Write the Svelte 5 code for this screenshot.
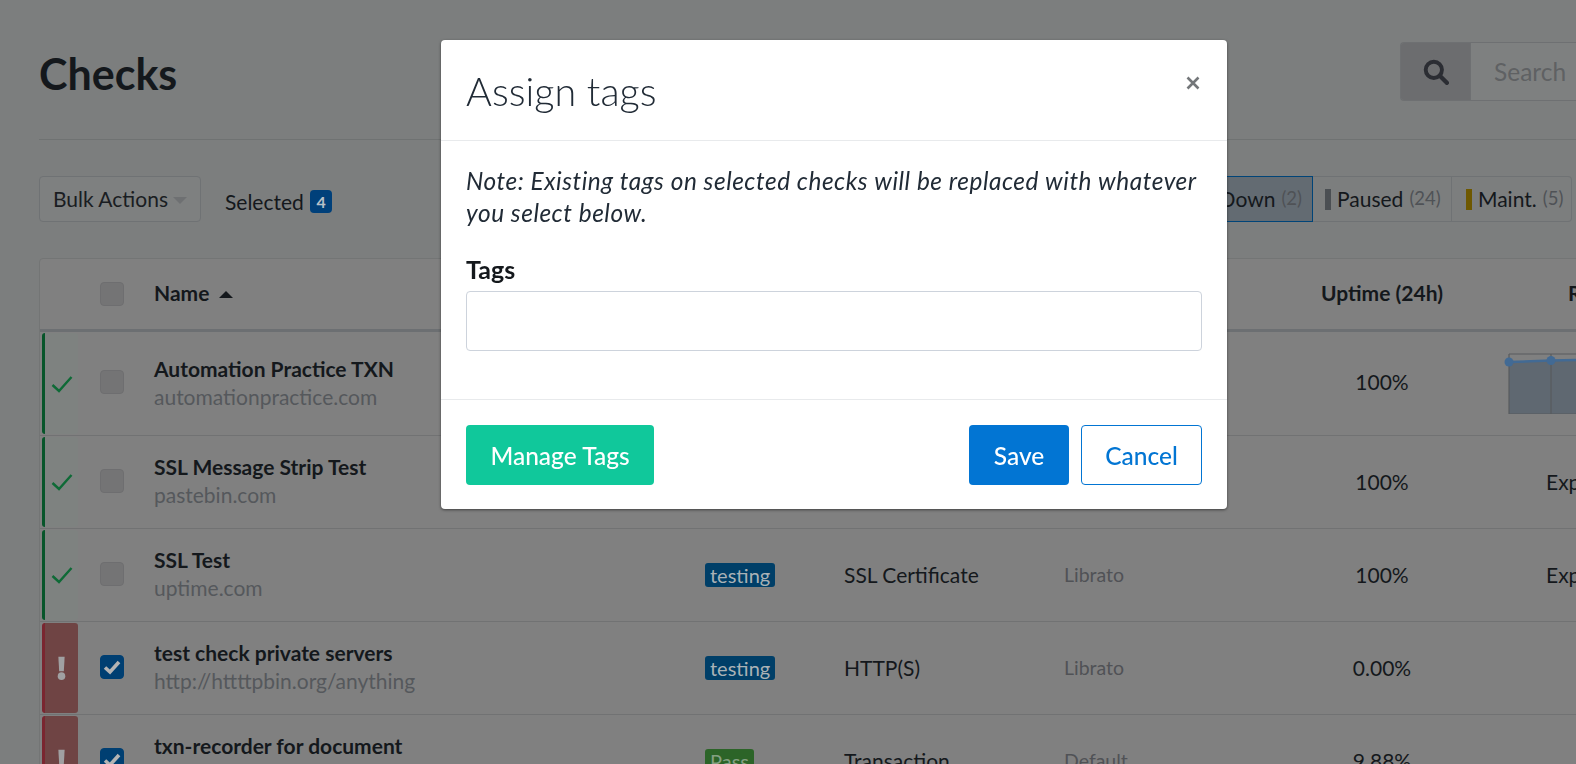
<script>
	const rows = [
		{ name: 'Automation Practice TXN', url: 'automationpractice.com', status: 'up', tall: true, uptime: '100%', chart: true },
		{ name: 'SSL Message Strip Test', url: 'pastebin.com', status: 'up', uptime: '100%', resp: 'Exp' },
		{ name: 'SSL Test', url: 'uptime.com', status: 'up', tag: 'testing', type: 'SSL Certificate', loc: 'Librato', uptime: '100%', resp: 'Exp' },
		{ name: 'test check private servers', url: 'http://httttpbin.org/anything', status: 'down', tag: 'testing', type: 'HTTP(S)', loc: 'Librato', uptime: '0.00%' },
		{ name: 'txn-recorder for document', url: '', status: 'down', tag: 'Pass', type: 'Transaction', loc: 'Default', uptime: '9.88%' }
	];
</script>

<div class="page">
	<header class="top">
		<h1>Checks</h1>
		<div class="search">
			<span class="search-btn">
				<svg viewBox="0 0 24 24" width="26" height="26"><circle cx="10" cy="10" r="7.5" fill="none" stroke="currentColor" stroke-width="3.6" /><path d="M15.5 15.5 22 22" stroke="currentColor" stroke-width="4" stroke-linecap="round" /></svg>
			</span>
			<span class="search-input">Search</span>
		</div>
	</header>

	<div class="toolbar">
		<button class="bulk">Bulk Actions <i class="caret"></i></button>
		<span class="selected">Selected <b class="count">4</b></span>
		<div class="filters">
			<span class="filter active">Down <small>(2)</small></span>
			<span class="filter paused-filter"><i class="swatch paused"></i>Paused <small>(24)</small></span>
			<span class="filter maint-filter"><i class="swatch maint"></i>Maint. <small>(5)</small></span>
		</div>
	</div>

	<div class="table">
		<div class="row head">
			<div></div>
			<div><span class="box"></span></div>
			<div class="sort">Name <i class="sort-caret"></i></div>
			<div></div>
			<div></div>
			<div></div>
			<div class="center">Uptime (24h)</div>
			<div class="resp-head">Response</div>
		</div>
		{#each rows as r}
			<div class="row" class:tall={r.tall}>
				<div class="status {r.status}">
					{#if r.status === 'up'}
						<svg viewBox="0 0 22 18" width="22" height="18"><path d="M1.5 10 8 16 20.5 2" fill="none" stroke="currentColor" stroke-width="2.4" /></svg>
					{:else}
						<svg viewBox="0 0 10 26" width="9" height="25"><path d="M1.5 0h7L7.6 16H2.4z" fill="currentColor" /><circle cx="5" cy="21.5" r="4.2" fill="currentColor" /></svg>
					{/if}
				</div>
				<div>
					{#if r.status === 'down'}
						<span class="box on">
							<svg viewBox="0 0 20 20" width="20" height="20"><path d="M3 10.5 8 15 17 5" fill="none" stroke="currentColor" stroke-width="3.6" /></svg>
						</span>
					{:else}
						<span class="box"></span>
					{/if}
				</div>
				<div class="name">
					<strong>{r.name}</strong>
					<span>{r.url}</span>
				</div>
				<div>
					{#if r.tag}<span class="tag" class:pass={r.tag === 'Pass'}>{r.tag}</span>{/if}
				</div>
				<div>{r.type ?? ''}</div>
				<div class="loc">{r.loc ?? ''}</div>
				<div class="center">{r.uptime}</div>
				<div class="resp">
					{#if r.chart}
						<svg class="chart" viewBox="0 0 80 64" width="80" height="64">
							<path d="M5 12 47 10.5 80 10V64H5z" fill="#5f6871" />
							<path d="M5 4H80M5 4V64H80M47 4V64" fill="none" stroke="#585b5e" stroke-width="1.2" />
							<path d="M5 12 47 10.5 80 10" fill="none" stroke="#426a94" stroke-width="2.5" />
							<circle cx="5" cy="12" r="4.5" fill="#426a94" />
							<circle cx="47" cy="10.5" r="4.5" fill="#426a94" />
						</svg>
					{:else if r.resp}
						<span class="exp">{r.resp}</span>
					{/if}
				</div>
			</div>
		{/each}
	</div>
</div>

<div class="modal-wrap">
	<div class="modal">
		<div class="modal-header">
			<h2>Assign tags</h2>
			<span class="close">
				<svg viewBox="0 0 14 14" width="14" height="14"><path d="M1.5 1.5 12.5 12.5M12.5 1.5 1.5 12.5" stroke="currentColor" stroke-width="2.6" /></svg>
			</span>
		</div>
		<div class="modal-body">
			<p>Note: Existing tags on selected checks will be replaced with whatever you select below.</p>
			<label for="tags">Tags</label>
			<input id="tags" type="text" />
		</div>
		<div class="modal-footer">
			<button class="btn manage">Manage Tags</button>
			<button class="btn save">Save</button>
			<button class="btn cancel">Cancel</button>
		</div>
	</div>
</div>

<style>
	:global(body) {
		margin: 0;
		overflow: hidden;
		background: #7c7e7e;
		font-family: Lato, 'Liberation Sans', sans-serif;
		color: #14181c;
	}

	.page {
		width: 1576px;
		height: 764px;
		box-sizing: border-box;
		padding-left: 39px;
		overflow: hidden;
		font-size: 21px;
	}

	.top {
		display: flex;
		justify-content: space-between;
		align-items: center;
		height: 140px;
		padding-top: 7px;
		box-sizing: border-box;
		border-bottom: 1px solid #6f7272;
		width: 1537px;
		white-space: nowrap;
	}

	h1 {
		margin: 0;
		font-size: 43px;
		font-weight: 700;
		color: #14181c;
	}

	.search {
		display: flex;
		width: 176px;
		height: 59px;
		box-sizing: border-box;
		border: 1px solid #6e7072;
		border-right: 0;
		border-radius: 4px 0 0 4px;
		margin-top: -3px;
		overflow: hidden;
	}

	.search-btn {
		width: 69px;
		display: flex;
		align-items: center;
		justify-content: center;
		background: #6c6d6f;
		border-right: 1px solid #6e7072;
		color: #2b2d33;
	}

	.search-input {
		flex: 1;
		padding-left: 23px;
		line-height: 57px;
		font-size: 24.5px;
		color: #5f6163;
		background: #7e8080;
	}

	.toolbar {
		display: flex;
		align-items: center;
		margin-top: 36px;
		height: 46px;
		width: 1533px;
		white-space: nowrap;
	}

	.bulk {
		width: 162px;
		height: 46px;
		padding: 0 0 2px 13px;
		text-align: left;
		background: #7e8080;
		border: 1px solid #6f7274;
		border-radius: 4px;
		font: inherit;
		color: #1a1d22;
	}

	.caret {
		display: inline-block;
		border: 7px solid transparent;
		border-top: 7px solid #6e7072;
		border-bottom: 0;
		vertical-align: 3px;
	}

	.selected {
		margin-left: 24px;
		padding-top: 4px;
	}

	.count {
		display: inline-block;
		width: 22px;
		height: 23px;
		margin-left: 1px;
		line-height: 23px;
		text-align: center;
		border-radius: 4px;
		background: #00407a;
		color: #b8c0c8;
		font-size: 16px;
		vertical-align: 2px;
	}

	.filters {
		display: flex;
		margin-left: auto;
		height: 46px;
	}

	.filter {
		display: flex;
		align-items: center;
		gap: 6px;
		padding: 0 0 2px 12px;
		border: 1px solid #6f7274;
		border-left: 0;
		box-sizing: border-box;
	}

	.paused-filter {
		width: 139px;
	}

	.maint-filter {
		width: 120px;
		border-radius: 0 4px 4px 0;
		padding-left: 14px;
	}

	.filter.active {
		background: #636b72;
		border: 1px solid #004478;
		width: 120px;
		padding-right: 10px;
		justify-content: flex-end;
	}

	.filter small {
		font-size: 18.5px;
		color: #4f5256;
	}

	.swatch {
		width: 6px;
		height: 21px;
		margin-top: 2px;
	}

	.paused {
		background: #4b4f53;
	}

	.maint {
		background: #6e5800;
	}

	.table {
		width: 1600px;
		margin-top: 36px;
		background: #808080;
		border: 1px solid #737575;
		border-radius: 4px 0 0 0;
	}

	.row {
		display: grid;
		grid-template-columns: 60px 54px 551px 139px 220px 256px 124px 200px;
		align-items: center;
		height: 93px;
		box-sizing: border-box;
		border-bottom: 1px solid #717273;
	}

	.row > div:not(.status) {
		margin-bottom: 2px;
	}

	.row.tall {
		height: 104px;
	}

	.row.tall > div:not(.status) {
		margin-bottom: 4px;
	}

	.row.tall > .name:not(.status) {
		margin-bottom: 2px;
	}

	.row.head {
		height: 73px;
		border-bottom: 3px solid #6c6f72;
		font-weight: 700;
	}

	.row.head > div:not(.status) {
		margin-bottom: 4px;
	}

	.head .box {
		margin-top: 4px;
	}

	.box {
		display: flex;
		align-items: center;
		justify-content: center;
		width: 24px;
		height: 24px;
		box-sizing: border-box;
		border-radius: 4px;
		background: #747475;
		border: 1px solid #6e6e70;
	}

	.box.on {
		background: #003f72;
		border-color: #003f72;
		color: #b4b4b4;
	}

	.sort-caret {
		display: inline-block;
		margin-left: 5px;
		border: 7px solid transparent;
		border-bottom: 7px solid #14181c;
		border-top: 0;
		vertical-align: 3px;
	}

	.status {
		align-self: stretch;
		width: 36px;
		margin: 1px 0 1px 2px;
		display: flex;
		align-items: center;
		justify-content: center;
		box-sizing: border-box;
		border-radius: 3px;
		border-left: 3px solid;
	}

	.status.up {
		border-color: #07552a;
		background: #7e8280;
		color: #0e6a36;
	}

	.status.down {
		border-color: #7a2630;
		background: #6f4444;
		color: #a0a0a2;
	}

	.name {
		display: flex;
		flex-direction: column;
		line-height: 28px;
		white-space: nowrap;
	}

	.name strong {
		font-weight: 700;
	}

	.name span {
		color: #55585c;
		min-height: 28px;
	}

	.tag {
		display: inline-block;
		height: 24px;
		line-height: 24px;
		padding: 0 5px;
		border-radius: 3px;
		font-size: 20px;
		background: #003f68;
		color: #aab2b6;
	}

	.tag.pass {
		background: #2c6428;
		color: #84a082;
	}

	.loc {
		color: #505256;
		font-size: 19.5px;
	}

	.center {
		text-align: center;
		white-space: nowrap;
	}

	.resp-head {
		margin-left: 124px;
		white-space: nowrap;
	}

	.resp {
		display: flex;
		align-items: center;
	}

	.chart {
		margin-left: 60px;
	}

	.exp {
		margin-left: 102px;
	}

	.modal-wrap {
		position: fixed;
		top: 40px;
		left: 441px;
		width: 786px;
	}

	.modal {
		background: #fff;
		border-radius: 4px;
		box-shadow: 0 1px 3px rgba(0, 0, 0, 0.5);
		color: #212b36;
	}

	.modal-header {
		display: flex;
		justify-content: space-between;
		align-items: center;
		height: 101px;
		padding: 0 25px;
		box-sizing: border-box;
		border-bottom: 1px solid #e8eaec;
	}

	h2 {
		margin: 0;
		font-size: 39.5px;
		font-weight: 300;
	}

	.close {
		color: #74777a;
		margin: -14px 2px 0 0;
	}

	.modal-body {
		padding: 24px 25px 48px;
		border-bottom: 1px solid #e8eaec;
	}

	p {
		margin: 0 0 25px;
		font-size: 24.4px;
		letter-spacing: 0.55px;
		line-height: 32px;
		font-style: italic;
	}

	label {
		display: block;
		font-size: 25px;
		font-weight: 700;
		line-height: 30px;
		margin-bottom: 7px;
		color: #14181c;
	}

	input {
		display: block;
		width: 100%;
		height: 60px;
		box-sizing: border-box;
		border: 1px solid #cdd3dc;
		border-radius: 4px;
	}

	.modal-footer {
		display: flex;
		padding: 25px 25px 24px;
		gap: 12px;
	}

	.btn {
		height: 60px;
		border-radius: 4px;
		border: 1px solid transparent;
		font: inherit;
		font-size: 24.5px;
		font-weight: 500;
	}

	.manage {
		width: 188px;
		margin-right: auto;
		background: #10c89b;
		color: #fff;
	}

	.save {
		width: 100px;
		background: #0275d3;
		color: #fff;
	}

	.cancel {
		width: 121px;
		background: #fff;
		border-color: #0275d3;
		color: #0275d3;
	}
</style>
